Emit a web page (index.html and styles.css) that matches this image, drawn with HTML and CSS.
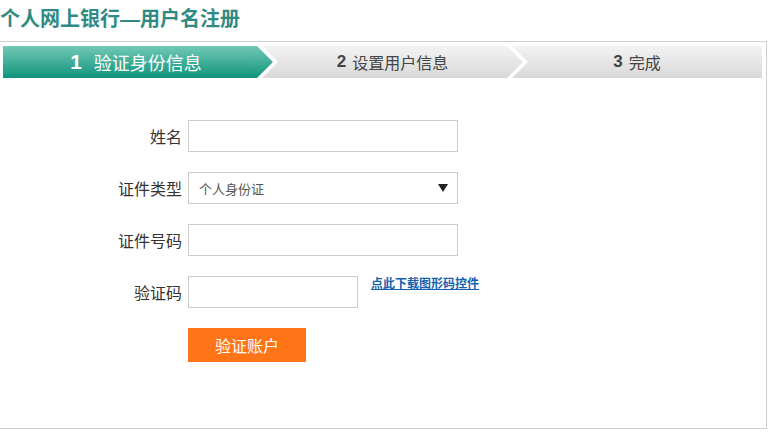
FILE: index.html
```html
<!DOCTYPE html>
<html lang="zh-CN">
<head>
<meta charset="utf-8">
<title>个人网上银行—用户名注册</title>
<link rel="stylesheet" href="styles.css">
</head>
<body>
<h1 class="title">个人网上银行—用户名注册</h1>
<div class="panel">
  <div class="steps">
    <div class="step step-first active"><b class="num">1</b><span>验证身份信息</span></div>
    <div class="step step-mid"><b class="num">2</b><span>设置用户信息</span></div>
    <div class="step step-last"><b class="num">3</b><span>完成</span></div>
  </div>
  <form class="form">
    <div class="row">
      <label class="label">姓名</label>
      <input class="input" type="text">
    </div>
    <div class="row">
      <label class="label">证件类型</label>
      <div class="select-wrap">
        <select class="select"><option>个人身份证</option></select>
      </div>
    </div>
    <div class="row">
      <label class="label">证件号码</label>
      <input class="input" type="text">
    </div>
    <div class="row row-top">
      <label class="label">验证码</label>
      <input class="input input-short" type="text">
      <a class="link" href="#">点此下载图形码控件</a>
    </div>
    <div class="row">
      <span class="label"></span>
      <button class="btn" type="button">验证账户</button>
    </div>
  </form>
</div>
</body>
</html>
```
FILE: styles.css
```css
* { box-sizing: border-box; }
html, body { margin: 0; padding: 0; background: #fff; }
body {
  font-family: "Liberation Sans", "Noto Sans CJK SC", sans-serif;
  color: #333;
  width: 782px;
}
.title {
  margin: 0;
  height: 41px;
  line-height: 39px;
  font-size: 20px;
  font-weight: bold;
  color: #2f8a84;
  letter-spacing: 0;
}
.panel {
  margin-left: -1px;
  width: 768px;
  height: 388px;
  border: 1px solid #cfcfcf;
  padding: 4px 0 0 3px;
}
.steps {
  display: flex;
  height: 32px;
}
.step {
  height: 32px;
  display: flex;
  align-items: center;
  justify-content: center;
  gap: 6px;
  background: linear-gradient(#f3f3f3, #d9d9d9);
  color: #444;
  font-size: 16px;
}
.step .num { font-size: 17px; }
.step-first {
  width: 270px;
  clip-path: polygon(0 0, calc(100% - 16px) 0, 100% 50%, calc(100% - 16px) 100%, 0 100%);
}
.step-mid {
  width: 261px;
  margin-left: -11px;
  padding-left: 0;
  clip-path: polygon(0 0, calc(100% - 16px) 0, 100% 50%, calc(100% - 16px) 100%, 0 100%, 16px 50%);
}
.step-last {
  width: 250px;
  margin-left: -11px;
  padding-left: 0;
  clip-path: polygon(0 0, 100% 0, 100% 100%, 0 100%, 16px 50%);
}
.step.active {
  background: linear-gradient(#72c9b6, #10937b);
  color: #fff;
  font-size: 18px;
  gap: 12px;
  padding-right: 4px;
}
.step.active .num { font-size: 21px; }
.form {
  display: flex;
  flex-direction: column;
  gap: 20px;
  margin-top: 42px;
  margin-left: -3px;
}
.row {
  display: flex;
  align-items: center;
  height: 32px;
  gap: 6px;
}
.label {
  width: 182px;
  text-align: right;
  font-size: 16px;
  color: #333;
}
.input {
  width: 270px;
  height: 32px;
  border: 1px solid #cccccc;
  padding: 0 10px;
  font-size: 13px;
  background: #fff;
  outline: none;
}
.input-short { width: 170px; }
.select-wrap {
  position: relative;
  width: 270px;
  height: 32px;
}
.select-wrap::after {
  content: "";
  position: absolute;
  right: 10px;
  top: 12px;
  border-left: 5px solid transparent;
  border-right: 5px solid transparent;
  border-top: 8px solid #222;
  pointer-events: none;
}
.select {
  appearance: none;
  -webkit-appearance: none;
  width: 100%;
  height: 100%;
  border: 1px solid #cccccc;
  border-radius: 0;
  background: #fff;
  padding: 0 10px;
  font-family: "Noto Sans CJK SC", sans-serif;
  font-size: 13px;
  color: #555;
}
.link {
  align-self: flex-start;
  margin-left: 7px;
  font-size: 12px;
  font-weight: bold;
  color: #1560b0;
  text-decoration: underline;
  line-height: 17px;
}
.btn {
  width: 118px;
  height: 34px;
  border: none;
  background: #ff7417;
  color: #fff;
  font-family: "Noto Sans CJK SC", sans-serif;
  font-size: 16px;
  padding: 0;
  margin-top: 2px;
}
```
